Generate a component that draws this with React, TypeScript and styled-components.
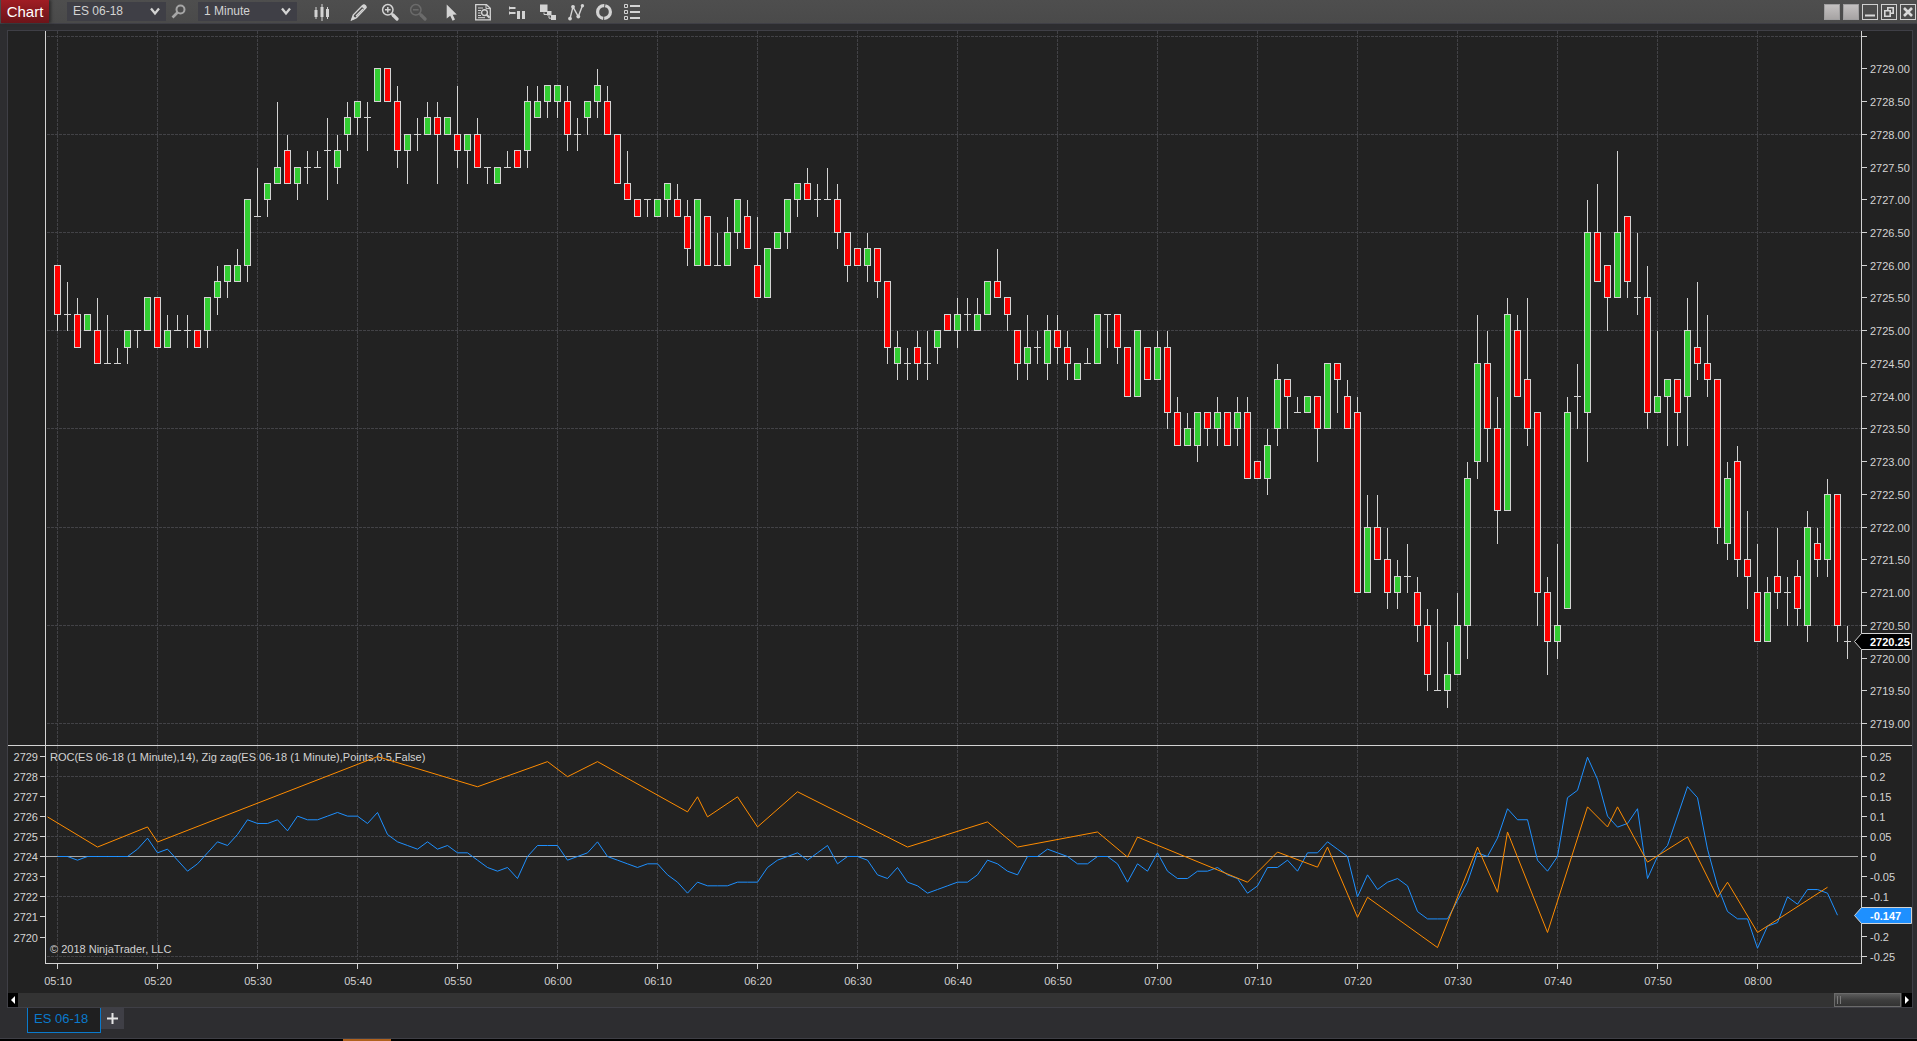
import React, { useLayoutEffect, useRef, useState } from "react";
import styled, { createGlobalStyle } from "styled-components";

const color = {
  window: "#2d2d30",
  border: "#3f3f46",
  chart: "#222222",
  grid: "#424246",
  line: "#d3d3d3",
  up: "#32cd32",
  down: "#ff0000",
  blue: "#1e90ff",
  orange: "#ff8c00",
  text: "#d3d3d3",
};
const sans = '"Liberation Sans", Arial, sans-serif';

const GlobalStyle = createGlobalStyle`
  *, *::before, *::after { box-sizing: border-box; }
  body { margin: 0; background: #000; font-family: ${sans}; }
  button, select { font-family: inherit; }
`;

/* ------------------------------------------------------------------ */
/* Market data: open, high, low, close as ticks (0.25) below 2729.00   */
/* ------------------------------------------------------------------ */
const TOP_PRICE = 2729;
const TICK = 0.25;

const bars: number[][] = `
12,12,16,15 15,13,16,15 15,14,17,17 16,15,16,15 16,14,18,18 18,15,18,18 18,17,18,18 17,16,18,16 16,16,17,16 16,14,16,14
14,14,17,17 17,15,17,16 16,15,16,16 16,15,17,16 16,16,17,17 16,14,17,14 14,12,15,13 13,12,14,12 13,11,13,12 12,8,13,8
9,6,9,9 8,7,9,7 7,2,7,6 5,4,7,7 7,6,8,6 6,5,7,6 6,5,6,6 5,3,8,5 6,4,7,5 4,2,5,3
3,2,4,2 3,2,5,3 2,0,2,0 0,0,2,2 2,1,6,5 5,4,7,4 4,3,5,4 4,2,4,3 3,2,7,4 4,3,4,3
4,1,6,5 5,4,7,4 4,3,6,6 6,6,7,6 7,6,7,6 6,5,6,6 5,5,6,6 5,1,6,2 3,1,3,2 2,1,3,1
2,1,3,1 2,1,5,4 4,3,5,4 3,2,4,2 2,0,3,1 2,1,4,4 4,4,7,7 7,5,8,8 8,8,9,9 8,8,9,8
9,8,9,8 8,7,9,7 8,7,9,9 9,8,12,11 12,8,12,8 9,9,12,12 12,10,12,12 12,9,12,10 10,8,11,8 9,8,11,11
12,9,14,14 14,11,14,11 11,10,11,10 10,8,11,8 8,7,9,7 7,6,8,8 8,7,9,8 8,6,8,8 8,7,11,10 10,10,13,12
11,11,12,12 12,10,13,11 11,11,14,13 13,13,18,17 18,16,19,17 18,17,19,18 17,16,19,18 18,16,19,18 17,16,18,16 15,15,16,16
16,14,17,15 15,14,16,15 16,14,16,15 15,13,15,13 13,11,14,14 14,14,16,15 16,16,19,18 18,15,19,17 17,16,18,17 18,15,19,16
16,15,18,17 17,16,19,18 19,18,19,18 18,17,18,18 18,15,18,15 15,15,17,15 15,15,18,17 17,17,20,20 20,16,20,16 17,17,19,19
19,16,19,17 17,16,22,21 21,20,23,23 23,21,23,22 23,21,24,21 21,21,23,22 22,20,23,21 21,21,23,23 22,20,23,21 21,20,25,25
24,24,25,25 25,22,26,23 22,18,23,19 19,19,22,20 21,20,21,21 21,20,21,20 20,20,24,22 22,18,22,18 18,18,21,19 20,19,22,22
21,20,32,32 32,26,32,28 28,26,30,30 30,28,33,32 32,30,33,31 31,29,32,31 32,31,35,34 34,33,38,37 38,33,38,38 38,35,39,37
37,32,37,34 34,24,36,25 24,15,25,18 18,16,24,22 22,20,29,27 27,14,27,15 16,15,20,20 19,14,23,22 21,21,34,32 32,31,37,35
35,29,36,34 33,20,33,21 20,18,22,20 21,8,24,10 10,7,13,13 12,12,16,14 14,5,14,10 9,9,14,13 14,10,15,14 14,12,22,21
21,16,21,20 20,19,23,19 19,19,23,21 20,14,23,16 17,13,19,18 18,15,20,19 19,19,29,28 29,24,30,25 24,23,31,30 30,27,33,31
32,29,35,35 35,31,35,32 31,28,33,32 32,31,34,32 31,30,34,33 34,27,35,28 29,28,31,30 30,25,31,26 26,26,35,34 35,34,36,35
`
  .trim()
  .split(/\s+/)
  .map((bar) => bar.split(",").map(Number));

/* Closes of the fourteen minutes that precede the first visible bar. */
const earlierCloses = [15, 15, 16, 15, 18, 18, 18, 16, 18, 19, 18, 18, 15, 12];
const closes = [...earlierCloses, ...bars.map((b) => b[3])];
const priceAt = (ticks: number) => TOP_PRICE - ticks * TICK;

const roc = bars.slice(0, -1).map((bar, i) => {
  const before = priceAt(closes[i]);
  return ((priceAt(bar[3]) - before) / before) * 100;
});

const zigzag = [
  [-1, 12], [4, 18], [9, 14], [10, 17], [32, 0], [42, 6], [49, 1], [51, 4], [54, 1], [63, 11],
  [64, 8], [65, 12], [68, 8], [70, 14], [74, 7], [85, 18], [93, 13], [96, 18], [104, 15], [107, 20],
  [108, 16], [119, 25], [122, 19], [126, 22], [127, 18], [130, 32], [131, 28], [138, 38], [142, 18],
  [144, 27], [145, 15], [149, 35], [153, 10], [155, 14], [156, 10], [159, 21], [163, 16], [166, 28],
  [167, 25], [170, 35], [177, 26],
];

/* ------------------------------------------------------------------ */
/* Chart geometry                                                      */
/* ------------------------------------------------------------------ */
const BAR_STEP = 10;
const AXIS_LEFT = 37;
const AXIS_RIGHT = 51;
const HIGHEST = 2729.578;
const LOWEST = 2718.672;

const barX = (width: number, i: number) => width - 65 - (179 - i) * BAR_STEP;
const timeMarks = Array.from({ length: 18 }, (_, n) => {
  const minutes = 310 + n * 10;
  const two = (v: number) => String(v).padStart(2, "0");
  return { index: n * 10, label: `${two(Math.floor(minutes / 60))}:${two(minutes % 60)}` };
});

function useSize() {
  const ref = useRef<HTMLDivElement>(null);
  const [size, setSize] = useState({ width: 0, height: 0 });
  useLayoutEffect(() => {
    const node = ref.current;
    if (!node) return;
    const measure = () => setSize({ width: node.clientWidth, height: node.clientHeight });
    measure();
    const observer = new ResizeObserver(measure);
    observer.observe(node);
    return () => observer.disconnect();
  }, []);
  return [ref, size] as const;
}

/* ------------------------------------------------------------------ */
/* Styled parts                                                        */
/* ------------------------------------------------------------------ */
const Window = styled.div`
  display: flex;
  flex-direction: column;
  height: 100vh;
  min-height: 480px;
  background: ${color.window};
  color: ${color.text};
  overflow: hidden;
`;

const Toolbar = styled.header`
  display: flex;
  align-items: center;
  flex: none;
  height: 24px;
  padding: 0 1px;
  background: linear-gradient(#4e4e4e, #4a4a4a);
  border-bottom: 1px solid ${color.border};
`;

const Title = styled.h1`
  align-self: stretch;
  width: 48px;
  margin: 0 18px 0 0;
  font-size: 15px;
  font-weight: 400;
  line-height: 23px;
  text-align: center;
  color: #fff;
  background: linear-gradient(#a01d24, #6c1419);
  box-shadow: 2px 0 3px #2a2a2a;
`;

const Picker = styled.label<{ $gap: number }>`
  position: relative;
  display: flex;
  width: 99px;
  height: 19px;
  margin-left: ${(p) => p.$gap}px;
`;

const PickerSelect = styled.select`
  appearance: none;
  width: 100%;
  padding: 0 20px 0 6px;
  border: 0;
  border-radius: 0;
  font-size: 12px;
  line-height: 19px;
  color: ${color.text};
  background: ${color.border};
`;

const PickerArrow = styled.svg`
  position: absolute;
  right: 6px;
  top: 5px;
  width: 10px;
  height: 9px;
  pointer-events: none;
`;

const Tool = styled.button<{ $gap: number; $tone?: string }>`
  flex: none;
  width: 18px;
  height: 18px;
  margin: 0 0 0 ${(p) => p.$gap}px;
  padding: 0;
  border: 0;
  background: none;
  color: ${(p) => p.$tone ?? "#d3d3d3"};
  svg { display: block; }
`;

const Tools = styled.div`
  display: flex;
  flex: 1;
  align-items: center;
`;

const WindowControls = styled.div`
  display: flex;
  gap: 3px;
`;

const WindowButton = styled.button<{ $blank?: boolean }>`
  width: 16px;
  height: 16px;
  padding: 0;
  border: 1px solid ${(p) => (p.$blank ? "#a09fa0" : "#d0d0d0")};
  background: ${(p) => (p.$blank ? "linear-gradient(#c4c1c1, #a7a4a4)" : "none")};
  color: #d8d8d8;
  svg { display: block; }
`;

const ChartFrame = styled.main`
  display: flex;
  flex-direction: column;
  flex: 1;
  min-height: 0;
  margin: 6px 4px 0 7px;
  border: 1px solid ${color.border};
  background: ${color.chart};
`;

const PricePane = styled.section`
  flex: 1;
  min-height: 0;
  overflow: hidden;
`;

const IndicatorPane = styled.section`
  flex: none;
  height: 218px;
  border-top: 1px solid ${color.line};
  overflow: hidden;
`;

const TimePane = styled.section`
  flex: none;
  height: 30px;
  overflow: hidden;
`;

const Drawing = styled.svg`
  display: block;
  font-family: ${sans};
  font-size: 11px;
  fill: ${color.text};
`;

const ScrollTrack = styled.div`
  display: flex;
  align-items: stretch;
  flex: none;
  height: 14px;
  background: #333333;
`;

const ScrollArrow = styled.button`
  display: grid;
  place-items: center;
  width: 10px;
  padding: 0;
  border: 0;
  background: #000;
`;

const ScrollThumb = styled.div`
  display: flex;
  align-items: center;
  gap: 2px;
  width: 67px;
  margin: 0 1px 0 auto;
  padding-left: 2px;
  border: 1px solid #6a6a6a;
  background: linear-gradient(#5c5c5c, #3e3e3e 50%, #333);
`;

const Grip = styled.span`
  width: 1px;
  height: 8px;
  background: #7a7a7a;
`;

const TabBar = styled.nav`
  display: flex;
  align-items: flex-start;
  flex: none;
  height: 31px;
  padding-left: 27px;
  border-bottom: 1px solid ${color.border};
`;

const Tab = styled.button`
  width: 74px;
  height: 25px;
  padding: 0 0 4px 6px;
  border: 1px solid #0a7acc;
  border-top: 0;
  font-size: 13px;
  text-align: left;
  color: #0a7acc;
  background: #1f1f20;
`;

const AddTab = styled.button`
  display: grid;
  place-items: center;
  width: 23px;
  height: 21px;
  padding: 0;
  border: 0;
  background: ${color.border};
`;

const Taskbar = styled.footer`
  flex: none;
  height: 2px;
  padding-left: 343px;
  background: #000;
`;

const ActiveTask = styled.div`
  width: 48px;
  height: 2px;
  background: #b0621e;
`;

/* ------------------------------------------------------------------ */
/* Chart drawing                                                       */
/* ------------------------------------------------------------------ */
type PaneProps = { width: number; height: number };

function GridColumns({ width, height }: PaneProps) {
  return (
    <g stroke={color.grid} strokeDasharray="3 1" shapeRendering="crispEdges">
      {timeMarks.map((m) => {
        const x = barX(width, m.index) + 0.5;
        return x > AXIS_LEFT ? <line key={m.label} x1={x} x2={x} y1={0} y2={height} /> : null;
      })}
    </g>
  );
}

function GridRows({ width, rows }: { width: number; rows: number[] }) {
  return (
    <g stroke={color.grid} strokeDasharray="3 1" shapeRendering="crispEdges">
      {rows.map((y) => (
        <line key={y} x1={AXIS_LEFT + 2} x2={width - AXIS_RIGHT} y1={y + 0.5} y2={y + 0.5} />
      ))}
    </g>
  );
}

function AxisLines({ width, height }: PaneProps) {
  return (
    <g fill={color.line} shapeRendering="crispEdges">
      <rect x={AXIS_LEFT} y={0} width={1} height={height} />
      <rect x={width - AXIS_RIGHT} y={0} width={1} height={height} />
    </g>
  );
}

function ValueTag({ width, y, fill, children }: { width: number; y: number; fill: string; children: string }) {
  const left = width - 58;
  const points = [
    [left, y], [left + 7, y - 8], [width - 1, y - 8], [width - 1, y + 8], [left + 7, y + 8],
  ];
  return (
    <g>
      <polygon points={points.map((p) => `${p[0] + 0.5},${p[1] + 0.5}`).join(" ")} fill={fill} stroke={color.line} />
      <text x={width - 42} y={y + 5} fill="#fff" fontWeight="bold">{children}</text>
    </g>
  );
}

function PriceChart() {
  const [ref, { width, height }] = useSize();
  const y = (price: number) => Math.floor(((HIGHEST - price) * height) / (HIGHEST - LOWEST));
  const labels = Array.from({ length: 22 }, (_, i) => 2729.5 - i * 0.5);
  const rows = Array.from({ length: 8 }, (_, i) => y(2729.5 - i * 1.5));
  return (
    <PricePane ref={ref} aria-label="Price">
      {width > 0 && (
        <Drawing width={width} height={height}>
          <GridRows width={width} rows={rows} />
          <GridColumns width={width} height={height} />
          <g shapeRendering="crispEdges">
            {bars.map(([o, h, l, c], i) => {
              const x = barX(width, i);
              if (x < AXIS_LEFT + 4) return null;
              const top = y(priceAt(Math.min(o, c)));
              const bottom = y(priceAt(Math.max(o, c)));
              const high = y(priceAt(h));
              const low = y(priceAt(l));
              return (
                <g key={i}>
                  {h < Math.min(o, c) && <rect x={x} y={high + 1} width={1} height={top - high} fill={color.line} />}
                  {l > Math.max(o, c) && <rect x={x} y={bottom} width={1} height={low - bottom + 1} fill={color.line} />}
                  {o === c ? (
                    <rect x={x - 3} y={top} width={7} height={1} fill={color.line} />
                  ) : (
                    <rect
                      x={x - 2.5}
                      y={top + 0.5}
                      width={6}
                      height={bottom - top}
                      fill={c < o ? color.up : color.down}
                      stroke={color.line}
                    />
                  )}
                </g>
              );
            })}
          </g>
          <AxisLines width={width} height={height} />
          {labels.map((price, i) => (
            <g key={price}>
              <rect x={width - AXIS_RIGHT} y={y(price)} width={6} height={1} fill={color.line} />
              {i > 0 && <text x={width - 42} y={y(price) + 5}>{price.toFixed(2)}</text>}
            </g>
          ))}
          <ValueTag width={width} y={y(2720.25)} fill="#000">2720.25</ValueTag>
        </Drawing>
      )}
    </PricePane>
  );
}

function IndicatorChart() {
  const [ref, { width, height }] = useSize();
  const rocY = (v: number) => 110 - v * 400;
  const zigY = (price: number) => 191 - (price - 2720) * 20.1;
  const rows = [0.2, 0.05, -0.1, -0.25].map(rocY);
  const rightLabels = [0.25, 0.2, 0.15, 0.1, 0.05, 0, -0.05, -0.1, -0.15, -0.2, -0.25];
  const leftLabels = Array.from({ length: 10 }, (_, i) => 2729 - i);
  const line = (points: number[][]) => points.map((p) => p.join(",")).join(" ");
  return (
    <IndicatorPane ref={ref} aria-label="Indicators">
      {width > 0 && (
        <Drawing width={width} height={height}>
          <clipPath id="indicator-plot">
            <rect x={AXIS_LEFT} y={0} width={Math.max(0, width - AXIS_LEFT - AXIS_RIGHT)} height={height} />
          </clipPath>
          <GridRows width={width} rows={rows} />
          <GridColumns width={width} height={height - 3} />
          <rect x={AXIS_LEFT} y={110} width={Math.max(0, width - AXIS_LEFT - AXIS_RIGHT - 3)} height={1} fill="#a9a9a9" />
          <text x={42} y={15}>ROC(ES 06-18 (1 Minute),14), Zig zag(ES 06-18 (1 Minute),Points,0.5,False)</text>
          <text x={42} y={207}>© 2018 NinjaTrader, LLC</text>
          <g fill="none" clipPath="url(#indicator-plot)">
            <polyline stroke={color.blue} points={line(roc.map((v, i) => [barX(width, i) + 0.5, rocY(v) + 0.5]))} />
            <polyline
              stroke={color.orange}
              points={line(zigzag.map(([i, t]) => [barX(width, i) + 0.5, zigY(priceAt(t)) + 0.5]))}
            />
          </g>
          <AxisLines width={width} height={height} />
          {leftLabels.map((price) => {
            const y = Math.floor(zigY(price));
            return (
              <g key={price}>
                <rect x={32} y={y} width={5} height={1} fill={color.line} />
                <text x={30} y={y + 5} textAnchor="end">{price}</text>
              </g>
            );
          })}
          {rightLabels.map((v) => (
            <g key={v}>
              <rect x={width - AXIS_RIGHT} y={Math.round(rocY(v))} width={6} height={1} fill={color.line} />
              {v !== -0.15 && <text x={width - 42} y={Math.round(rocY(v)) + 5}>{String(v)}</text>}
            </g>
          ))}
          <ValueTag width={width} y={169} fill={color.blue}>-0.147</ValueTag>
        </Drawing>
      )}
    </IndicatorPane>
  );
}

function TimeAxis() {
  const [ref, { width, height }] = useSize();
  return (
    <TimePane ref={ref} aria-label="Time">
      {width > 0 && (
        <Drawing width={width} height={height}>
          <rect x={AXIS_LEFT} y={0} width={Math.max(0, width - AXIS_LEFT - AXIS_RIGHT + 1)} height={1} fill={color.line} />
          {timeMarks.map((m) => {
            const x = barX(width, m.index);
            return x > AXIS_LEFT ? (
              <g key={m.label}>
                <rect x={x} y={0} width={1} height={6} fill={color.line} />
                <text x={x + 1} y={22} textAnchor="middle">{m.label}</text>
              </g>
            ) : null;
          })}
        </Drawing>
      )}
    </TimePane>
  );
}

/* ------------------------------------------------------------------ */
/* Icons                                                               */
/* ------------------------------------------------------------------ */
function Icon({ children }: { children: React.ReactNode }) {
  return (
    <svg width="18" height="18" viewBox="0 0 18 18" fill="currentColor" aria-hidden="true">
      {children}
    </svg>
  );
}

const outline = { fill: "none", stroke: "currentColor" } as const;

const SearchIcon = () => (
  <Icon>
    <circle cx="10.5" cy="6.5" r="4" {...outline} strokeWidth="2" />
    <path d="M7.5 9.5 L2.5 14.5" {...outline} strokeWidth="2.6" />
  </Icon>
);
const BarsIcon = () => (
  <Icon>
    <path d="M3 4v12M9 1v17M14.5 4v12" {...outline} strokeWidth="1" />
    <rect x="1.5" y="7" width="3" height="7" />
    <rect x="7.5" y="4" width="3" height="10" />
    <rect x="13" y="6" width="3" height="8" />
  </Icon>
);
const PencilIcon = () => (
  <Icon>
    <path d="M1.7 16.8 L3.4 11.8 L12.6 2.6 Q14 1.4 15.4 2.7 Q16.6 4 15.4 5.4 L6.4 14.6 Z" {...outline} strokeWidth="1.4" />
    <path d="M1 17.5 L2.8 12.5 L6 15.6 Z M11.5 3.5 L14 1.5 L16.6 4.2 L14.5 6.6 Z" />
    <path d="M6 13 L13 6" {...outline} strokeWidth="1.2" />
  </Icon>
);
const ZoomIcon = ({ plus }: { plus?: boolean }) => (
  <Icon>
    <circle cx="6.8" cy="6.8" r="5.2" {...outline} strokeWidth="1.5" />
    <path d={plus ? "M4 6.8h5.6M6.8 4v5.6" : "M4 6.8h5.6"} {...outline} strokeWidth="1.5" />
    <path d="M10.6 10.6 L12 12" {...outline} strokeWidth="1.6" />
    <path d="M12 12 L16 16" {...outline} strokeWidth="3.2" strokeLinecap="round" />
  </Icon>
);
const PointerIcon = () => (
  <Icon>
    <path d="M3.7 1.5 L13.8 11.5 L9.7 11.8 L12 16.6 L9.6 17.8 L7.2 12.8 L3.7 15.4 Z" />
  </Icon>
);
const DataIcon = () => (
  <Icon>
    <path d="M1.7 1.7 H12.5 L16.3 5.2 V16.8 H1.7 Z" {...outline} strokeWidth="1.3" />
    <path d="M12 1.5 V5.6 H16.5" {...outline} strokeWidth="1" />
    <path d="M4 5h5M4 7.5h3M4 10h2.5M4 12.5h3M4 14.7h7" {...outline} strokeWidth="1" />
    <circle cx="10.5" cy="9.6" r="2.9" {...outline} strokeWidth="1.4" />
    <path d="M12.6 11.8 L15.6 14.8" {...outline} strokeWidth="2" />
  </Icon>
);
const TraderIcon = () => (
  <Icon>
    <path d="M2 5h5.5M2 10h5.5" {...outline} strokeWidth="2" />
    <path d="M1.5 3.5v3M1.5 8.5v3" {...outline} strokeWidth="1" />
    <rect x="9" y="8" width="3" height="8" />
    <rect x="14" y="8" width="3" height="8" />
  </Icon>
);
const StrategyIcon = () => (
  <Icon>
    <rect x="1" y="1.5" width="7.5" height="7.5" />
    <rect x="8" y="8" width="4.5" height="4.5" />
    <rect x="12" y="12" width="5" height="5" />
    <path d="M5 9.5v2h3M10 13v2.2h2" {...outline} strokeWidth="1" />
  </Icon>
);
const IndicatorIcon = () => (
  <Icon>
    <path d="M3 15.6 L6 3.8 L11.3 13.6 L15.4 2.8" {...outline} strokeWidth="1.4" />
    <circle cx="3" cy="15.6" r="1.9" />
    <circle cx="6" cy="3.8" r="1.9" />
    <circle cx="11.3" cy="13.6" r="1.9" />
    <circle cx="15.4" cy="2.8" r="1.7" />
  </Icon>
);
const RingIcon = () => (
  <Icon>
    <circle cx="9" cy="9" r="6.4" {...outline} strokeWidth="3.2" strokeDasharray="19.1 1" strokeDashoffset="9.5" />
  </Icon>
);
const ListIcon = () => (
  <Icon>
    <path d="M1.5 1.5h3v3h-3zM1.5 7.5h3v3h-3zM1.5 13.5h3v3h-3z" {...outline} strokeWidth="1" />
    <path d="M7 3h10M7 9h10M7 15h10" {...outline} strokeWidth="2" />
  </Icon>
);

const tools: { name: string; gap: number; icon: React.ReactNode; tone?: string }[] = [
  { name: "Bar type", gap: 16, icon: <BarsIcon /> },
  { name: "Draw", gap: 19, icon: <PencilIcon /> },
  { name: "Zoom in", gap: 13, icon: <ZoomIcon plus /> },
  { name: "Zoom out", gap: 10, icon: <ZoomIcon />, tone: "#6b6b6b" },
  { name: "Pointer", gap: 16, icon: <PointerIcon /> },
  { name: "Data box", gap: 13, icon: <DataIcon /> },
  { name: "Chart trader", gap: 16, icon: <TraderIcon /> },
  { name: "Strategies", gap: 13, icon: <StrategyIcon /> },
  { name: "Indicators", gap: 10, icon: <IndicatorIcon /> },
  { name: "Refresh", gap: 10, icon: <RingIcon /> },
  { name: "Properties", gap: 10, icon: <ListIcon /> },
];

function Dropdown({ label, value, gap }: { label: string; value: string; gap: number }) {
  return (
    <Picker $gap={gap}>
      <PickerSelect aria-label={label} defaultValue={value}>
        <option>{value}</option>
      </PickerSelect>
      <PickerArrow viewBox="0 0 10 9" aria-hidden="true">
        <path d="M1 1.5 L5 6.5 L9 1.5" fill="none" stroke="#d3d3d3" strokeWidth="2.3" />
      </PickerArrow>
    </Picker>
  );
}

export default function App() {
  return (
    <>
      <GlobalStyle />
      <Window>
        <Toolbar>
          <Title>Chart</Title>
          <Tools>
            <Dropdown label="Instrument" value="ES 06-18" gap={0} />
            <Tool $gap={4} $tone="#a6a6a6" aria-label="Find instrument">
              <SearchIcon />
            </Tool>
            <Dropdown label="Interval" value="1 Minute" gap={10} />
            {tools.map((t) => (
              <Tool key={t.name} $gap={t.gap} $tone={t.tone} aria-label={t.name}>
                {t.icon}
              </Tool>
            ))}
          </Tools>
          <WindowControls>
            <WindowButton $blank aria-label="Instrument link" />
            <WindowButton $blank aria-label="Interval link" />
            <WindowButton aria-label="Minimize">
              <svg width="14" height="14" viewBox="0 0 14 14"><path d="M2 10.5h10" stroke="currentColor" strokeWidth="2" /></svg>
            </WindowButton>
            <WindowButton aria-label="Restore">
              <svg width="14" height="14" viewBox="0 0 14 14" fill="none" stroke="currentColor" strokeWidth="1.6">
                <path d="M5.8 5V2.8h5.4v5.4H9M2.8 5.8h5.4v5.4H2.8z" />
              </svg>
            </WindowButton>
            <WindowButton aria-label="Close">
              <svg width="14" height="14" viewBox="0 0 14 14"><path d="M3 3l8 8M11 3l-8 8" stroke="currentColor" strokeWidth="2.6" /></svg>
            </WindowButton>
          </WindowControls>
        </Toolbar>
        <ChartFrame>
          <PriceChart />
          <IndicatorChart />
          <TimeAxis />
          <ScrollTrack>
            <ScrollArrow aria-label="Scroll left">
              <svg width="4" height="8" viewBox="0 0 4 8"><path d="M4 0v8L0 4z" fill="#fff" /></svg>
            </ScrollArrow>
            <ScrollThumb>
              <Grip />
              <Grip />
            </ScrollThumb>
            <ScrollArrow aria-label="Scroll right">
              <svg width="4" height="8" viewBox="0 0 4 8"><path d="M0 0v8l4-4z" fill="#fff" /></svg>
            </ScrollArrow>
          </ScrollTrack>
        </ChartFrame>
        <TabBar>
          <Tab>ES 06-18</Tab>
          <AddTab aria-label="New tab">
            <svg width="11" height="11" viewBox="0 0 11 11"><path d="M5.5 0v11M0 5.5h11" stroke="#e6e6e6" strokeWidth="2" /></svg>
          </AddTab>
        </TabBar>
        <Taskbar>
          <ActiveTask />
        </Taskbar>
      </Window>
    </>
  );
}
